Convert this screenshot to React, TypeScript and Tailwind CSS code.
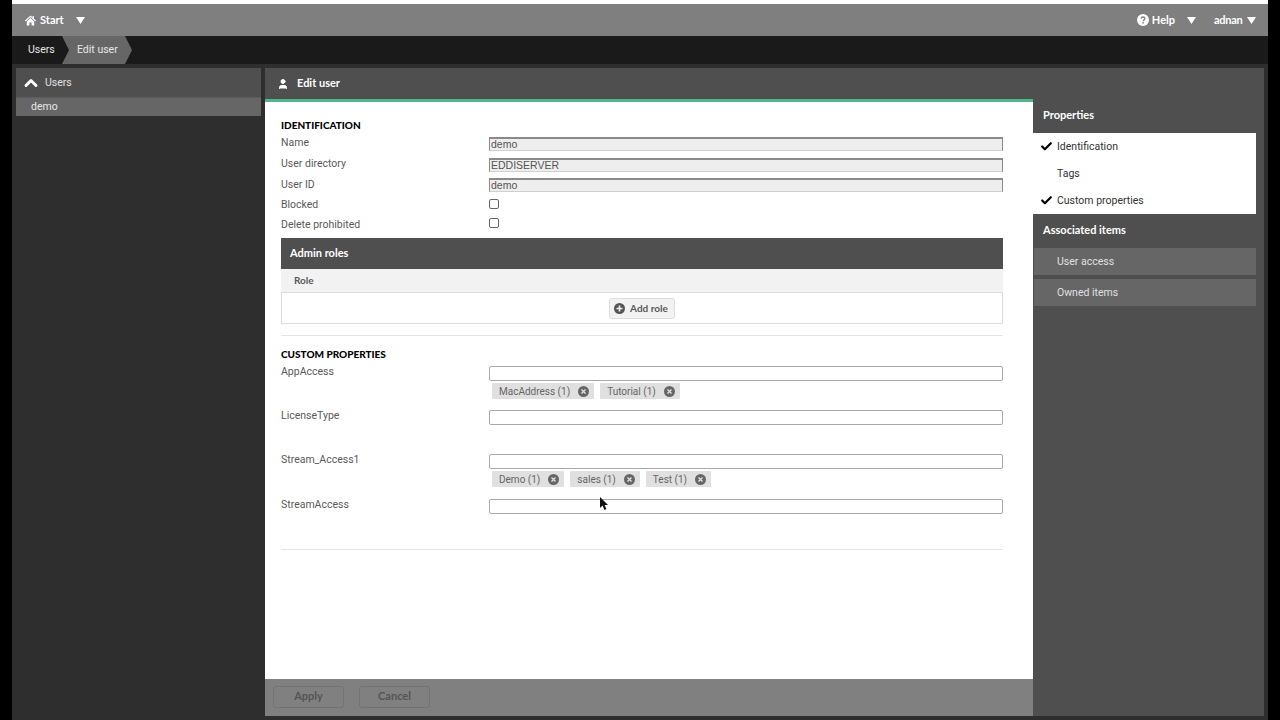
import { Check, ChevronUp, User } from "lucide-react";

const reg = "font-['Roboto',sans-serif] text-[10.5px]";

function Caret({ className = "" }: { className?: string }) {
  return (
    <svg width="9" height="7" viewBox="0 0 9 7" className={className}>
      <path d="M0 0h9L4.5 7z" fill="#fff" />
    </svg>
  );
}

function HomeIcon() {
  return (
    <svg width="11" height="11" viewBox="0 0 11 11">
      <path d="M5.5.5L0 5.6l.7.8L5.5 2l4.8 4.4.7-.8L9 3.7V1H7.6v1.4z" fill="#fff" />
      <path d="M1.8 6.4L5.5 3l3.7 3.4V10.5H6.6V7.4H4.4v3.1H1.8z" fill="#fff" />
    </svg>
  );
}

function HelpIcon() {
  return (
    <svg width="12" height="12" viewBox="0 0 12 12">
      <circle cx="6" cy="6" r="6" fill="#fff" />
      <path d="M4.1 4.6C4.2 3.5 5 3 6 3c1.1 0 1.9.6 1.9 1.6 0 1.4-1.8 1.4-1.8 2.7" fill="none" stroke="#7f7f7f" strokeWidth="1.3" />
      <rect x="5.3" y="8.1" width="1.5" height="1.5" fill="#7f7f7f" />
    </svg>
  );
}

function Tag({ label }: { label: string }) {
  return (
    <span className="flex h-4 items-center rounded-[1px] bg-[#e0e0e0] pl-[7px] pr-[5px] font-['Roboto',sans-serif] text-[10px] text-[#666]">
      {label}
      <span className="ml-2 grid h-[11px] w-[11px] place-items-center rounded-full bg-[#666] text-[#e0e0e0]">
        <svg width="7" height="7" viewBox="0 0 7 7">
          <path d="M1.5 1.5l4 4M5.5 1.5l-4 4" stroke="currentColor" strokeWidth="1.4" />
        </svg>
      </span>
    </span>
  );
}

function ReadOnly({ label, value, h, mt }: { label: string; value: string; h: string; mt: string }) {
  return (
    <div className={`flex ${h}`}>
      <div className={`w-[208px] leading-[18px] text-[#595959] ${reg}`}>{label}</div>
      <div className={`flex h-[14px] w-[514px] items-center border border-t-2 border-[#8a8a8a] border-b-[#d0d0d0] bg-[#eeeeee] pl-px font-['Liberation_Sans',sans-serif] text-[10.5px] text-[#555] ${mt}`}>
        {value}
      </div>
    </div>
  );
}

function CheckRow({ label, h, mt }: { label: string; h: string; mt: string }) {
  return (
    <div className={`flex ${h}`}>
      <div className={`w-[208px] leading-[18px] text-[#595959] ${reg}`}>{label}</div>
      <span className={`h-[10px] w-[10px] rounded-[2px] border border-[#666] bg-white ${mt}`} />
    </div>
  );
}

function PropRow({ label, tags, h }: { label: string; tags?: string[]; h: string }) {
  return (
    <div className={`flex ${h}`}>
      <div className={`w-[208px] leading-[18px] text-[#595959] ${reg}`}>{label}</div>
      <div className="w-[514px]">
        <div className="mt-[3px] h-[15px] rounded-[2px] border border-[#a8a8a8] bg-white" />
        {tags && (
          <div className="mt-[2px] flex gap-[6px] pl-[3px]">
            {tags.map((t) => (
              <Tag key={t} label={t} />
            ))}
          </div>
        )}
      </div>
    </div>
  );
}

export default function App() {
  return (
    <div className="relative flex h-[720px] w-[1280px] flex-col overflow-hidden bg-black px-3 font-['Lato',sans-serif]">
      <div className="h-1 shrink-0 bg-white" />
      {/* top bar */}
      <div className="flex h-8 shrink-0 items-center justify-between bg-[#7f7f7f] px-3 text-[11px] font-bold text-white">
        <div className="flex items-center">
          <span className="ml-px"><HomeIcon /></span>
          <span className="ml-[4px]">Start</span>
          <Caret className="ml-[12px]" />
        </div>
        <div className="flex items-center">
          <HelpIcon />
          <span className="ml-[3px]">Help</span>
          <Caret className="ml-[12px]" />
          <span className="ml-[18px] w-[28px] tracking-[-0.3px]">adnan</span>
          <Caret className="ml-[5px]" />
        </div>
      </div>
      {/* breadcrumb */}
      <div className={`flex h-7 shrink-0 items-center bg-[#1a1a1a] text-[#e6e6e6] ${reg}`}>
        <span className="ml-[16px] w-[34px]">Users</span>
        <span className="flex h-7 w-[70px] items-center bg-[#666] pl-[15px] [clip-path:polygon(0_0,90%_0,100%_50%,90%_100%,0_100%,10%_50%)]">
          Edit user
        </span>
      </div>
      {/* body */}
      <div className="flex min-h-0 flex-1 gap-1 bg-[#2e2e2e] p-1">
        <aside className="w-[245px] shrink-0">
          <div className={`flex h-[29px] items-center bg-[#4f4f4f] text-[#e0e0e0] ${reg}`}>
            <ChevronUp size={20} strokeWidth={3.5} className="ml-[5px] text-white" />
            <span className="ml-[4px]">Users</span>
          </div>
          <div className={`h-[19px] border-t border-[#5c5c5c] bg-[#666] pl-[15px] leading-[18px] text-[#e6e6e6] ${reg}`}>demo</div>
        </aside>
        <main className="flex min-w-0 flex-1 bg-[#4f4f4f]">
          <div className="flex w-[768px] shrink-0 flex-col">
            <div className="flex h-[31px] shrink-0 items-center text-[11px] font-bold text-white">
              <User size={12} fill="#fff" className="ml-[12px]" />
              <span className="ml-[8px]">Edit user</span>
            </div>
            <div className="flex min-h-0 flex-1 flex-col border-t-[3px] border-[#52b788] bg-white">
              <div className="w-[754px] flex-1 px-4 pt-[17px]">
                <h2 className="text-[10px] font-black leading-[12px] text-black">IDENTIFICATION</h2>
                <ReadOnly label="Name" value="demo" h="h-[21px] mt-[3px]" mt="mt-[3px]" />
                <ReadOnly label="User directory" value="EDDISERVER" h="h-[21px]" mt="mt-[3px]" />
                <ReadOnly label="User ID" value="demo" h="h-[20px]" mt="mt-[2px]" />
                <CheckRow label="Blocked" h="h-[20px]" mt="mt-[3px]" />
                <CheckRow label="Delete prohibited" h="h-[22px]" mt="mt-[2px]" />
                <div>
                  <div className="flex h-[31px] items-center bg-[#4f4f4f] pl-[9px] text-[11px] font-bold text-white">Admin roles</div>
                  <div className="flex h-[24px] items-center border-b border-[#ddd] bg-[#f2f2f2] pl-[13px] text-[10px] font-bold text-[#595959]">Role</div>
                  <div className="flex h-[31px] items-center justify-center border-x border-b border-[#ddd]">
                    <button className="flex h-[21px] items-center gap-[5px] rounded-[3px] border border-[#ddd] bg-[#f2f2f2] pl-[4px] pr-[6px] text-[10px] font-bold text-[#595959]">
                      <svg width="11" height="11" viewBox="0 0 11 11">
                        <circle cx="5.5" cy="5.5" r="5.5" fill="#555" />
                        <path d="M5.5 2.5v6M2.5 5.5h6" stroke="#f2f2f2" strokeWidth="1.6" />
                      </svg>
                      Add role
                    </button>
                  </div>
                </div>
                <div className="mt-[11px] border-t border-[#e5e5e5]" />
                <h2 className="mt-[12px] text-[10px] font-black leading-[12px] text-black">CUSTOM PROPERTIES</h2>
                <div className="mt-[3px]">
                  <PropRow label="AppAccess" h="h-[44px]" tags={["MacAddress (1)", "Tutorial (1)"]} />
                  <PropRow label="LicenseType" h="h-[44px]" />
                  <PropRow label="Stream_Access1" h="h-[45px]" tags={["Demo (1)", "sales (1)", "Test (1)"]} />
                  <PropRow label="StreamAccess" h="h-[53px]" />
                </div>
                <div className="border-t border-[#e5e5e5]" />
              </div>
              <div className="flex h-[37px] shrink-0 items-center gap-[15px] bg-[#808080] pb-[2px] pl-2 text-[11px] font-bold text-[#555]">
                <button className="h-[22px] w-[71px] rounded-[3px] border border-[#747474]">Apply</button>
                <button className="h-[22px] w-[71px] rounded-[3px] border border-[#747474]">Cancel</button>
              </div>
            </div>
          </div>
          <div className="w-[223px] shrink-0 pt-[30px]">
            <div className="flex h-[35px] items-center pl-[10px] text-[11px] font-bold text-white">Properties</div>
            <div className={`bg-white text-[#333] ${reg}`}>
              <div className="flex h-[27px] items-center"><Check size={13} strokeWidth={4} className="ml-[7px] text-black" /><span className="ml-[4px]">Identification</span></div>
              <div className="flex h-[27px] items-center pl-[24px]">Tags</div>
              <div className="flex h-[27px] items-center"><Check size={13} strokeWidth={4} className="ml-[7px] text-black" /><span className="ml-[4px]">Custom properties</span></div>
            </div>
            <div className="flex h-[34px] items-center pb-[2px] pl-[10px] text-[11px] font-bold text-white">Associated items</div>
            <div className={`ml-px flex h-[27px] items-center bg-[#666] pl-[23px] text-[#e0e0e0] ${reg}`}>User access</div>
            <div className={`ml-px mt-1 flex h-[27px] items-center bg-[#666] pl-[23px] text-[#e0e0e0] ${reg}`}>Owned items</div>
          </div>
        </main>
      </div>
      {/* mouse pointer */}
      <svg width="10" height="14" viewBox="0 0 10 14" className="absolute left-[600px] top-[497px]">
        <path d="M0 0l0 11 2.6-2.4 1.8 4.4 2-.9-1.8-4.2H8z" fill="#111" />
      </svg>
    </div>
  );
}
